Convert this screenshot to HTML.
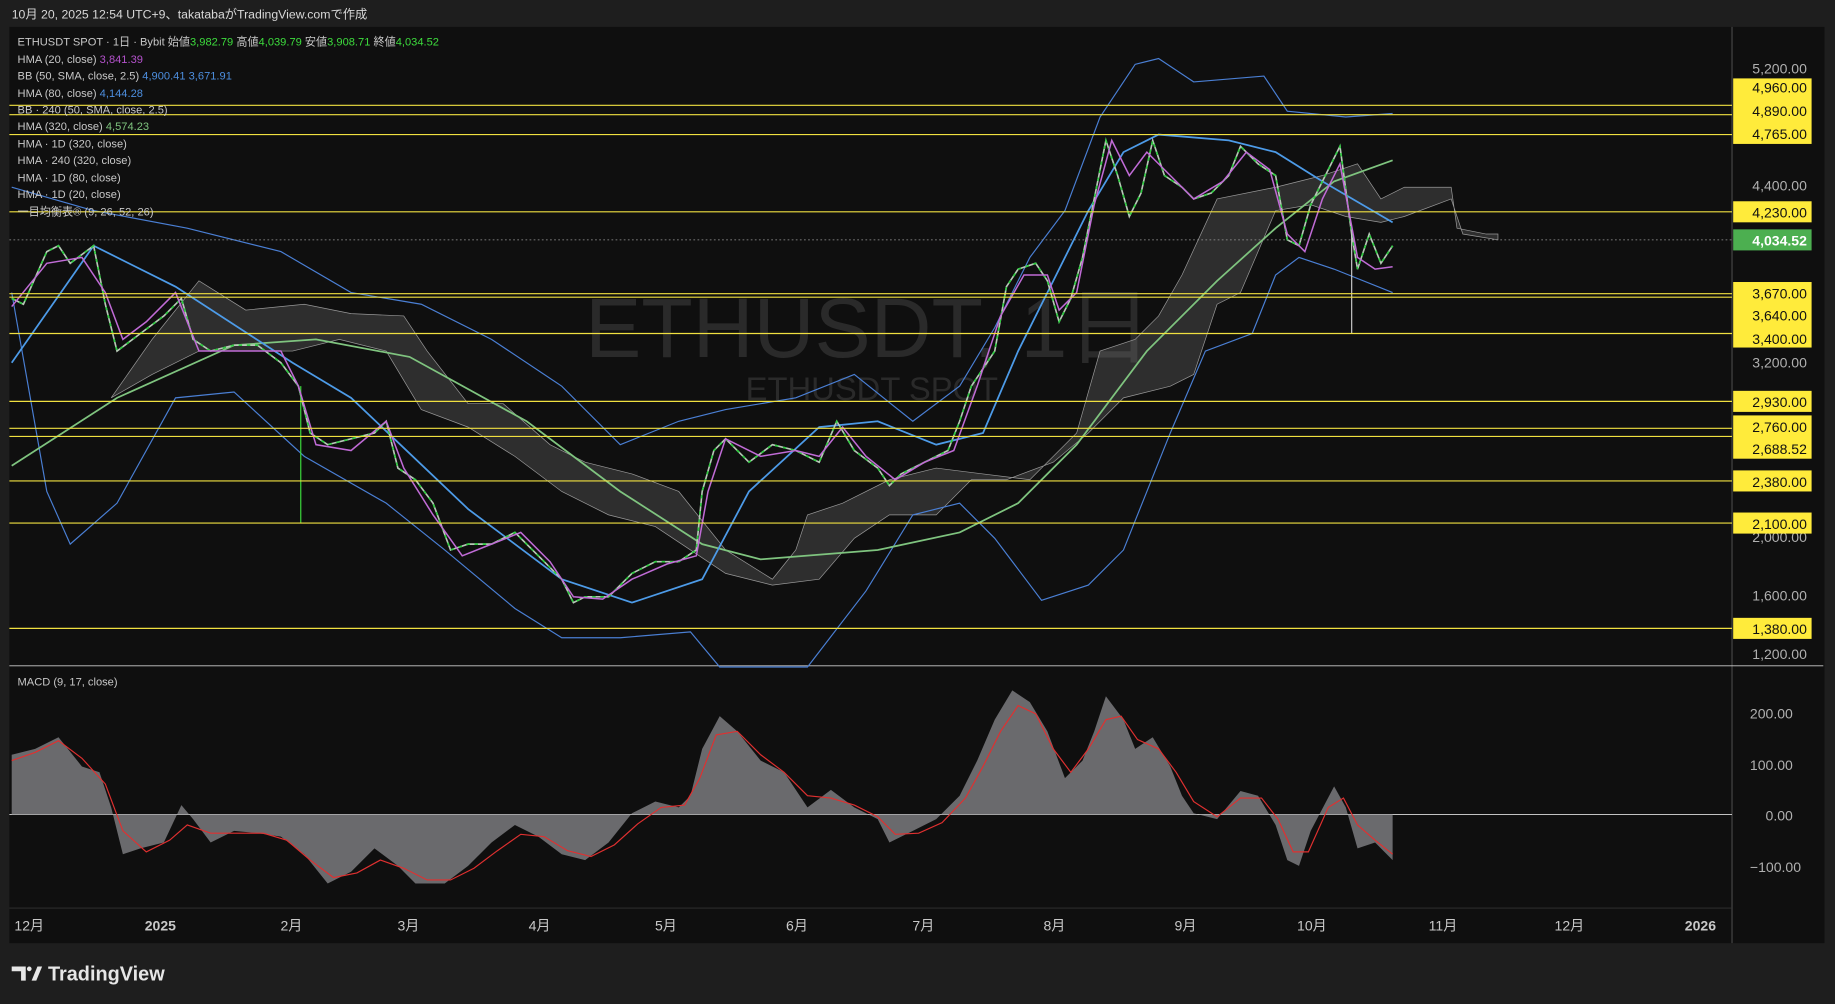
<!DOCTYPE html>
<html><head><meta charset="utf-8"><style>
html,body{margin:0;padding:0;background:#1f1f1f;width:1835px;height:1004px;overflow:hidden}
svg{display:block}
text{font-family:"Liberation Sans","Noto Sans CJK JP",sans-serif}
</style></head><body>
<svg width="1835" height="1004" viewBox="0 0 1568 858" preserveAspectRatio="none">
<rect width="1568" height="858" fill="#1e1e1e"/>
<text x="10" y="16" font-size="10.5" fill="#d8d8d8">10月 20, 2025 12:54 UTC+9、takatabaがTradingView.comで作成</text>
<rect x="8" y="23" width="1551" height="783" fill="#0f0f0f"/>
<line x1="1480" y1="23" x2="1480" y2="806" stroke="#555" stroke-width="0.8"/>
<line x1="8" y1="569" x2="1558" y2="569" stroke="#ccc" stroke-width="0.8"/>
<line x1="8" y1="776" x2="1480" y2="776" stroke="#333" stroke-width="0.8"/>
<text x="742" y="305" font-size="72" fill="#2a2a2a" text-anchor="middle">ETHUSDT, 1日</text>
<text x="745" y="342" font-size="28" fill="#2a2a2a" text-anchor="middle">ETHUSDT SPOT</text>
<polygon fill="#777" fill-opacity="0.3" stroke="#999" stroke-width="0.6" points="95,340 130,290 170,240 210,265 260,260 300,268 345,270 365,300 400,345 430,345 470,380 500,395 540,405 580,420 620,470 660,495 680,470 690,440 720,430 760,410 800,400 840,405 880,410 920,370 940,300 970,290 990,270 1010,235 1040,170 1090,160 1130,150 1160,140 1180,170 1200,160 1240,160 1245,195 1270,200 1280,200 1280,205 1250,200 1240,170 1200,185 1180,190 1150,185 1120,175 1090,180 1060,250 1040,260 1020,320 1000,330 960,340 930,370 900,395 860,410 830,410 800,440 760,440 730,460 700,495 660,500 620,490 590,470 560,450 520,440 480,420 440,390 400,365 360,350 330,300 290,290 250,300 200,300 170,300 130,320 95,340"/>
<polyline fill="none" stroke="#4a7fd4" stroke-width="1" points="10,160 80,180 160,195 240,215 300,250 360,260 420,290 480,330 530,380 580,360 620,350 680,340 730,320 780,360 820,330 850,280 880,220 910,180 940,100 970,55 990,50 1020,70 1080,65 1100,95 1150,100 1190,97"/>
<polyline fill="none" stroke="#4a7fd4" stroke-width="1" points="10,250 40,420 60,465 100,430 150,340 200,335 260,390 330,430 380,470 440,520 480,545 530,545 590,540 615,570 690,570 740,505 780,440 820,430 850,460 890,513 930,500 960,470 1000,370 1030,300 1070,285 1090,235 1110,220 1140,230 1190,250"/>
<polyline fill="none" stroke="#7fc47f" stroke-width="1.5" points="10,398 100,340 200,295 270,290 350,305 450,360 530,420 600,465 650,478 750,470 820,455 870,430 920,380 980,300 1040,240 1090,195 1140,155 1190,137"/>
<polyline fill="none" stroke="#4d9be8" stroke-width="1.5" points="10,310 80,210 150,245 250,310 300,340 400,435 480,495 540,515 600,495 640,420 700,365 750,360 800,380 840,370 870,300 900,240 930,180 960,130 990,115 1050,120 1090,130 1130,155 1190,190"/>
<polyline fill="none" stroke="#b8c8b8" stroke-width="1.4" points="10,255 20,260 40,215 50,210 60,225 80,210 90,260 100,300 120,285 140,270 155,255 165,290 180,300 200,295 220,295 240,310 255,330 265,370 280,380 300,375 320,370 330,360 340,400 355,410 370,430 385,470 400,465 420,465 440,455 460,475 480,495 490,515 500,510 520,510 540,490 560,480 580,480 595,470 600,420 610,385 620,375 640,395 660,380 680,385 700,395 715,360 730,385 750,400 760,415 770,405 790,395 810,385 820,360 830,330 850,300 860,245 870,230 885,225 895,240 905,275 915,255 925,220 935,170 945,120 955,150 965,185 975,165 985,120 995,150 1010,160 1020,170 1035,165 1050,150 1060,125 1075,140 1090,150 1100,205 1110,210 1120,175 1135,145 1145,125 1155,200 1160,230 1170,200 1180,225 1190,210"/>
<polyline fill="none" stroke="#2ecc40" stroke-width="1.4" stroke-dasharray="3,4" points="10,255 20,260 40,215 50,210 60,225 80,210 90,260 100,300 120,285 140,270 155,255 165,290 180,300 200,295 220,295 240,310 255,330 265,370 280,380 300,375 320,370 330,360 340,400 355,410 370,430 385,470 400,465 420,465 440,455 460,475 480,495 490,515 500,510 520,510 540,490 560,480 580,480 595,470 600,420 610,385 620,375 640,395 660,380 680,385 700,395 715,360 730,385 750,400 760,415 770,405 790,395 810,385 820,360 830,330 850,300 860,245 870,230 885,225 895,240 905,275 915,255 925,220 935,170 945,120 955,150 965,185 975,165 985,120 995,150 1010,160 1020,170 1035,165 1050,150 1060,125 1075,140 1090,150 1100,205 1110,210 1120,175 1135,145 1145,125 1155,200 1160,230 1170,200 1180,225 1190,210"/>
<line x1="257" y1="330" x2="257" y2="447" stroke="#3ddc3d" stroke-width="1"/>
<line x1="1155" y1="200" x2="1155" y2="285" stroke="#ccc" stroke-width="1"/>
<polyline fill="none" stroke="#c06bd6" stroke-width="1.3" points="10,262 40,225 70,220 90,250 105,290 125,275 150,250 170,300 200,300 240,300 255,330 270,380 300,385 330,360 345,400 370,440 395,475 420,465 445,455 470,480 490,510 515,512 540,495 570,482 595,475 605,420 620,375 650,390 680,385 700,390 720,365 740,390 765,410 790,395 815,385 835,330 855,270 875,235 895,235 905,265 920,250 935,175 950,120 965,150 980,130 1000,150 1020,170 1045,155 1065,130 1085,145 1100,200 1115,215 1130,170 1145,140 1160,220 1175,230 1190,228"/>
<g stroke="#f0e040" stroke-width="1">
<line x1="8" y1="90" x2="1480" y2="90"/><line x1="8" y1="98" x2="1480" y2="98"/><line x1="8" y1="115" x2="1480" y2="115"/><line x1="8" y1="181" x2="1480" y2="181"/><line x1="8" y1="251" x2="1480" y2="251"/><line x1="8" y1="254" x2="1480" y2="254"/><line x1="8" y1="285" x2="1480" y2="285"/><line x1="8" y1="343" x2="1480" y2="343"/><line x1="8" y1="366" x2="1480" y2="366"/><line x1="8" y1="373" x2="1480" y2="373"/><line x1="8" y1="411" x2="1480" y2="411"/><line x1="8" y1="447" x2="1480" y2="447"/><line x1="8" y1="537" x2="1480" y2="537"/>
</g>
<line x1="8" y1="205" x2="1480" y2="205" stroke="#999" stroke-width="0.7" stroke-dasharray="1.5,2"/>
<g font-size="9.5" fill="#c8c8c8">
<text x="15" y="39">ETHUSDT SPOT · 1日 · Bybit  始値<tspan fill="#3ddc3d">3,982.79</tspan>  高値<tspan fill="#3ddc3d">4,039.79</tspan>  安値<tspan fill="#3ddc3d">3,908.71</tspan>  終値<tspan fill="#3ddc3d">4,034.52</tspan></text>
<text x="15" y="54">HMA (20, close)  <tspan fill="#b452cc">3,841.39</tspan></text>
<text x="15" y="68">BB (50, SMA, close, 2.5)  <tspan fill="#4d8fe0">4,900.41  3,671.91</tspan></text>
<text x="15" y="83">HMA (80, close)  <tspan fill="#4d8fe0">4,144.28</tspan></text>
<text x="15" y="97">BB · 240 (50, SMA, close, 2.5)</text>
<text x="15" y="111">HMA (320, close)  <tspan fill="#7fc47f">4,574.23</tspan></text>
<text x="15" y="126">HMA · 1D (320, close)</text>
<text x="15" y="140">HMA · 240 (320, close)</text>
<text x="15" y="155">HMA · 1D (80, close)</text>
<text x="15" y="169">HMA · 1D (20, close)</text>
<text x="15" y="184">一目均衡表® (9, 26, 52, 26)</text>
<text x="15" y="586">MACD (9, 17, close)</text>
</g>
<g font-size="12" fill="#b0b0b0" text-anchor="end">
<text x="1544" y="63">5,200.00</text><text x="1544" y="163">4,400.00</text><text x="1544" y="314">3,200.00</text><text x="1544" y="463">2,000.00</text><text x="1544" y="513">1,600.00</text><text x="1544" y="563">1,200.00</text>
<text x="1532" y="614">200.00</text><text x="1532" y="658">100.00</text><text x="1532" y="701">0.00</text><text x="1539" y="745">−100.00</text>
</g>
<g fill="#ffeb3b">
<rect x="1481" y="67" width="67" height="56"/>
<rect x="1481" y="172" width="67" height="18"/>
<rect x="1481" y="241" width="67" height="56"/>
<rect x="1481" y="334" width="67" height="18"/>
<rect x="1481" y="355" width="67" height="37"/>
<rect x="1481" y="402" width="67" height="18"/>
<rect x="1481" y="438" width="67" height="18"/>
<rect x="1481" y="528" width="67" height="18"/>
</g>
<rect x="1481" y="196" width="67" height="18" fill="#4caf50"/>
<g font-size="12" fill="#111" text-anchor="end">
<text x="1544" y="79">4,960.00</text><text x="1544" y="99">4,890.00</text><text x="1544" y="119">4,765.00</text><text x="1544" y="186">4,230.00</text>
<text x="1544" y="255">3,670.00</text><text x="1544" y="274">3,640.00</text><text x="1544" y="294">3,400.00</text>
<text x="1544" y="348">2,930.00</text><text x="1544" y="369">2,760.00</text><text x="1544" y="388">2,688.52</text><text x="1544" y="416">2,380.00</text><text x="1544" y="452">2,100.00</text><text x="1544" y="542">1,380.00</text>
<text x="1544" y="210" fill="#fff" font-weight="bold">4,034.52</text>
</g>
<line x1="8" y1="696" x2="1480" y2="696" stroke="#ddd" stroke-width="0.8"/>
<polygon fill="#7a7a7e" fill-opacity="0.85" points="10,696 10,645 30,640 50,630 70,655 85,660 95,690 105,730 120,725 140,720 155,688 165,700 180,720 200,710 220,712 240,715 260,730 280,755 300,745 320,725 340,740 355,755 380,755 400,740 420,720 440,705 460,715 480,730 500,735 520,720 540,695 560,685 580,690 590,680 600,640 615,612 630,625 650,650 670,660 690,690 710,675 730,690 750,700 760,720 780,710 800,700 820,680 835,650 850,615 865,590 880,600 895,625 910,665 925,650 935,625 945,595 960,615 970,640 985,630 1000,655 1010,680 1020,695 1040,700 1060,676 1075,680 1090,705 1100,735 1110,740 1120,710 1140,672 1150,690 1160,725 1175,720 1190,735 1190,696"/>
<polyline fill="none" stroke="#e03030" stroke-width="1" points="10,650 30,643 50,633 70,648 90,670 105,710 125,728 145,718 160,705 180,712 200,712 225,712 245,718 265,735 285,750 305,746 325,735 345,742 365,752 385,752 405,742 425,727 445,713 465,715 485,727 505,732 525,722 545,704 565,690 585,688 598,665 612,628 630,625 650,645 670,660 690,680 710,682 730,688 750,698 765,713 785,712 805,703 825,682 840,655 855,625 870,603 885,610 900,640 915,660 930,640 945,615 958,612 972,632 990,640 1005,660 1020,685 1040,698 1060,682 1078,682 1092,700 1105,728 1118,728 1135,690 1148,682 1160,705 1175,718 1190,730"/>
<g font-size="12" fill="#c8c8c8" text-anchor="middle">
<text x="25" y="795">12月</text><text x="137" y="795" font-weight="bold">2025</text><text x="249" y="795">2月</text><text x="349" y="795">3月</text><text x="461" y="795">4月</text><text x="569" y="795">5月</text><text x="681" y="795">6月</text><text x="789" y="795">7月</text><text x="901" y="795">8月</text><text x="1013" y="795">9月</text><text x="1121" y="795">10月</text><text x="1233" y="795">11月</text><text x="1341" y="795">12月</text><text x="1453" y="795" font-weight="bold">2026</text>
</g>
<g fill="#e6e6e6">
<path d="M10,826 h12 v12 h-4 v-8 h-8z"/><circle cx="25" cy="828" r="2"/><path d="M27,838 l5,-12 h4 l-5,12z"/>
</g>
<text x="41" y="838" font-size="17" font-weight="bold" fill="#e6e6e6">TradingView</text>
</svg>
</body></html>
